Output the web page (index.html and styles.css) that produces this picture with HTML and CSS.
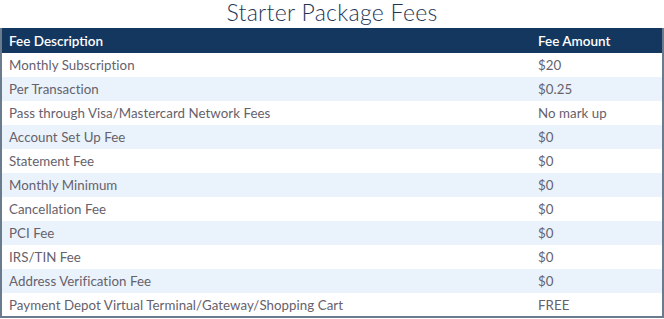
FILE: index.html
```html
<!DOCTYPE html>
<html>
<head>
<meta charset="utf-8">
<link rel="stylesheet" href="styles.css">
</head>
<body>
<h2 class="title">Starter Package Fees</h2>
<table class="fees">
<thead>
<tr><th class="desc">Fee Description</th><th class="amt">Fee Amount</th></tr>
</thead>
<tbody>
<tr><td>Monthly Subscription</td><td>$20</td></tr>
<tr><td>Per Transaction</td><td>$0.25</td></tr>
<tr><td>Pass through Visa/Mastercard Network Fees</td><td>No mark up</td></tr>
<tr><td>Account Set Up Fee</td><td>$0</td></tr>
<tr><td>Statement Fee</td><td>$0</td></tr>
<tr><td>Monthly Minimum</td><td>$0</td></tr>
<tr><td>Cancellation Fee</td><td>$0</td></tr>
<tr><td>PCI Fee</td><td>$0</td></tr>
<tr><td>IRS/TIN Fee</td><td>$0</td></tr>
<tr><td>Address Verification Fee</td><td>$0</td></tr>
<tr><td>Payment Depot Virtual Terminal/Gateway/Shopping Cart</td><td>FREE</td></tr>
</tbody>
</table>
</body>
</html>
```
FILE: styles.css
```css
html, body {
  margin: 0;
  padding: 0;
  background: #ffffff;
}
body {
  font-family: Lato, "Open Sans", sans-serif;
  width: 664px;
}
.title {
  margin: 0;
  height: 28px;
  line-height: 24px;
  text-align: center;
  font-size: 23px;
  font-weight: 300;
  color: #1e3656;
  letter-spacing: 0.3px;
}
.fees {
  width: 664px;
  border-collapse: collapse;
  border: 2px solid #6b7b8e;
  border-top: none;
  box-sizing: border-box;
}
.fees th {
  background: #14375f;
  color: #ffffff;
  font-weight: 600;
  font-size: 13.5px;
  text-align: left;
  height: 25px;
  padding: 0 0 0 7px;
  box-sizing: border-box;
}
.fees th.desc {
  width: 530px;
}
.fees td {
  height: 24px;
  padding: 0 0 0 7px;
  font-size: 13.3px;
  color: #66616b;
  box-sizing: border-box;
  letter-spacing: 0.05px;
}
.fees tbody tr:nth-child(even) td {
  background: #eaf3fb;
}
```
